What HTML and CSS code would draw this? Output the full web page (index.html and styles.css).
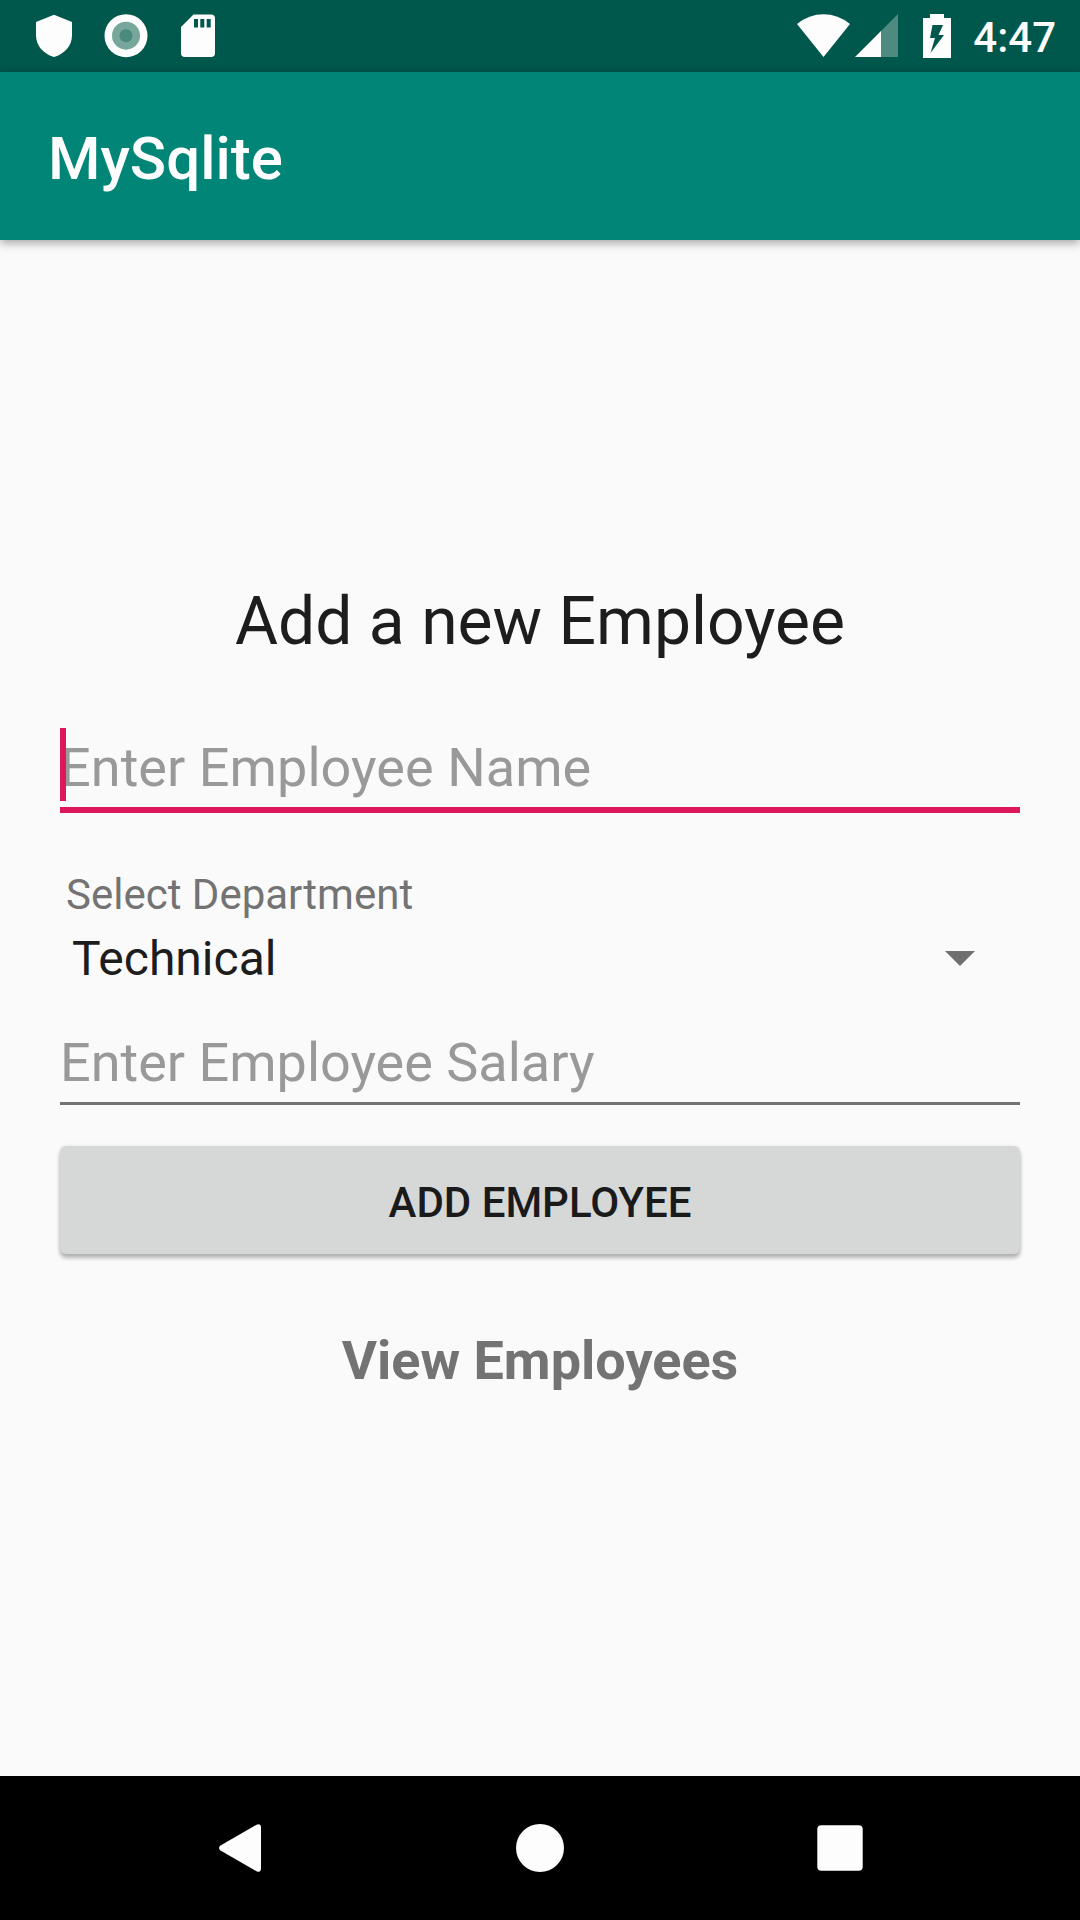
FILE: index.html
```html
<!DOCTYPE html>
<html lang="en">
<head>
<meta charset="utf-8">
<title>MySqlite</title>
<link rel="stylesheet" href="styles.css">
</head>
<body>
<div class="screen">
  <header class="status-bar">
    <svg class="status-left" width="216" height="72" viewBox="0 0 216 72">
      <path fill="#fdfdfd" d="M54 14.7 72 22v13c0 11-7.500 19-18 22-10.500-3-18-11-18-22V22z"/>
      <circle cx="126" cy="35.700" r="21.500" fill="#fdfdfd"/>
      <circle cx="126" cy="35.700" r="14" fill="#77a69b"/>
      <circle cx="126" cy="35.700" r="6.500" fill="#4a8a7d"/>
      <path fill="#fdfdfd" d="M193.500 14.500H211a4 4 0 0 1 4 4V53a4 4 0 0 1-4 4h-26a4 4 0 0 1-4-4V27z"/>
      <path fill="#00574b" d="M194 19h4v8.500h-4zM200.300 19h4v8.500h-4zM206.700 19h4v8.500h-4z"/>
    </svg>
    <div class="status-right">
      <svg width="160" height="72" viewBox="0 0 160 72">
        <path fill="#fdfdfd" d="M1 24Q13 14.300 27.500 14.300T54 24L27.500 57z"/>
        <path fill="#4f8a80" d="M102 14v43H84V32z"/>
        <path fill="#fdfdfd" d="M59 57 85 31v26z"/>
        <path fill="#fdfdfd" fill-rule="evenodd" d="M134 14h14v4h7v40h-28V18h7zM136.500 25 134 38h5l-4.500 15L148 35h-5.500l4.500-10z"/>
      </svg>
      <span class="clock">4:47</span>
    </div>
  </header>
  <div class="app-bar">MySqlite</div>
  <main class="form">
    <h1 class="heading">Add a new Employee</h1>
    <div class="field field-name"><span class="caret"></span>Enter Employee Name</div>
    <div class="label">Select Department</div>
    <div class="spinner">
      <span>Technical</span>
      <svg class="arrow" width="30" height="15" viewBox="0 0 30 15"><path fill="#6f6f6f" d="M0 0h30L15 15z"/></svg>
    </div>
    <div class="field field-salary">Enter Employee Salary</div>
    <button class="add-button">ADD EMPLOYEE</button>
    <div class="view-link">View Employees</div>
  </main>
  <nav class="nav-bar">
    <svg width="48" height="48" viewBox="0 0 48 48"><path fill="#fdfdfd" d="M4.500 21.500 40.500.8Q45 -1.200 45 4v40q0 5.200-4.500 3.200L4.500 26.500Q1.500 24 4.500 21.500z"/></svg>
    <svg width="48" height="48" viewBox="0 0 48 48"><circle cx="24" cy="24" r="24" fill="#fdfdfd"/></svg>
    <svg width="48" height="48" viewBox="0 0 48 48"><rect x="1.300" y="1.300" width="45.400" height="45.400" rx="4" fill="#fdfdfd"/></svg>
  </nav>
</div>
</body>
</html>
```
FILE: styles.css
```css
* { box-sizing: border-box; }
body {
  margin: 0;
  font-family: Roboto, sans-serif;
  background: #fafafa;
}
svg { display: block; }
.screen {
  width: 1080px;
  height: 1920px;
  display: flex;
  flex-direction: column;
  overflow: hidden;
}
.status-bar {
  height: 72px;
  flex: none;
  background: #00574b;
  display: flex;
  justify-content: space-between;
}
.status-right {
  display: flex;
  padding-right: 24px;
}
.clock {
  width: 100px;
  text-align: right;
  padding-top: 2px;
  font-size: 42px;
  font-weight: 500;
  line-height: 72px;
  color: #fdfdfd;
}
.app-bar {
  height: 168px;
  flex: none;
  padding: 5px 48px 0;
  background: #008577;
  color: #fdfdfd;
  font-size: 60px;
  font-weight: 500;
  line-height: 163px;
  box-shadow: 0 3px 9px rgba(0, 0, 0, 0.35);
}
.form {
  flex: 1;
  padding: 343px 60px 0;
  display: flex;
  flex-direction: column;
}
.heading {
  margin: 0;
  text-align: center;
  font-size: 66px;
  font-weight: 400;
  line-height: 78px;
  color: #1d1d1d;
}
.field {
  position: relative;
  font-size: 54px;
  line-height: 79px;
  color: #999;
}
.field-name {
  margin-top: 67px;
  border-bottom: 6px solid #de165c;
  letter-spacing: 0.06px;
}
.field-salary {
  margin-top: 34px;
  border-bottom: 3px solid #737373;
}
.caret {
  position: absolute;
  left: 0;
  top: 0;
  width: 6px;
  height: 73px;
  background: #de165c;
}
.label {
  margin-top: 57px;
  padding-left: 6px;
  font-size: 42px;
  line-height: 50px;
  color: #737373;
}
.spinner {
  margin-top: 9px;
  padding: 0 45px 0 12px;
  height: 60px;
  display: flex;
  align-items: center;
  justify-content: space-between;
  font-size: 48px;
  line-height: 60px;
  color: #1d1d1d;
}
.arrow { margin-bottom: 1px; }
.add-button {
  margin-top: 41px;
  height: 108px;
  padding: 5px 0 0;
  border: 0;
  border-radius: 6px;
  background: #d6d7d7;
  box-shadow: 0 4px 4px rgba(0, 0, 0, 0.28), 0 0 4px rgba(0, 0, 0, 0.08);
  font-family: inherit;
  font-size: 42px;
  font-weight: 500;
  line-height: 50px;
  color: #1a1a1a;
}
.view-link {
  margin-top: 75px;
  text-align: center;
  font-size: 54px;
  font-weight: 700;
  line-height: 64px;
  color: #737373;
}
.nav-bar {
  height: 144px;
  flex: none;
  padding: 0 216px;
  background: #000;
  display: flex;
  align-items: center;
  justify-content: space-between;
}
```
